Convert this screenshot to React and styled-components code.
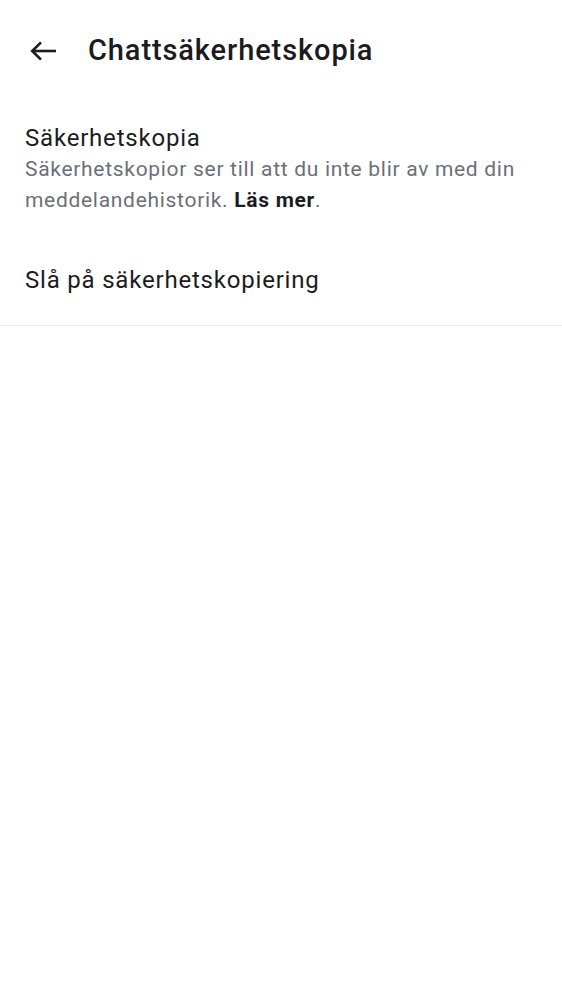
import styled, { createGlobalStyle } from 'styled-components';

const GlobalStyle = createGlobalStyle`
  body {
    margin: 0;
    background: #ffffff;
    font-family: Roboto, "Noto Sans", sans-serif;
  }
`;

const Page = styled.div`
  width: 562px;
  min-height: 1000px;
  background: #ffffff;
`;

const Toolbar = styled.div`
  display: flex;
  align-items: center;
  height: 100px;
  padding-left: 29px;
  gap: 31px;
`;

const BackButton = styled.button`
  display: flex;
  align-items: center;
  justify-content: center;
  width: 28px;
  height: 28px;
  padding: 0;
  margin-top: 2px;
  border: none;
  background: none;
  color: #1c1b22;
`;

const Title = styled.h1`
  margin: 0;
  font-size: 29px;
  font-weight: 500;
  color: #1c1b22;
  letter-spacing: 0.9px;
`;

const Section = styled.div`
  padding: 22px 25px 22px;
`;

const SectionTitle = styled.div`
  font-size: 24px;
  line-height: 32px;
  color: #1c1b22;
  letter-spacing: 0.8px;
`;

const SectionText = styled.p`
  margin: 0;
  font-size: 21px;
  line-height: 31px;
  color: #6b6f78;
  letter-spacing: 0.7px;

  b {
    color: #1c1b22;
    font-weight: 700;
  }
`;

const Row = styled.div`
  display: flex;
  align-items: center;
  height: 88px;
  padding: 0 25px 4px;
  font-size: 24px;
  letter-spacing: 0.8px;
  color: #1c1b22;
  border-bottom: 1px solid #e6e6eb;
  box-sizing: border-box;
`;

export default function App() {
  return (
    <Page>
      <GlobalStyle />
      <Toolbar>
        <BackButton aria-label="Tillbaka">
          <svg width="28" height="22" viewBox="0 0 28 22" fill="none" stroke="currentColor" strokeWidth="2.6">
            <path d="M27 11H3.5" />
            <path d="M12 2.3L3.2 11l8.8 8.7" />
          </svg>
        </BackButton>
        <Title>Chattsäkerhetskopia</Title>
      </Toolbar>
      <Section>
        <SectionTitle>Säkerhetskopia</SectionTitle>
        <SectionText>
          Säkerhetskopior ser till att du inte blir av med din meddelandehistorik. <b>Läs mer</b>.
        </SectionText>
      </Section>
      <Row>Slå på säkerhetskopiering</Row>
    </Page>
  );
}
